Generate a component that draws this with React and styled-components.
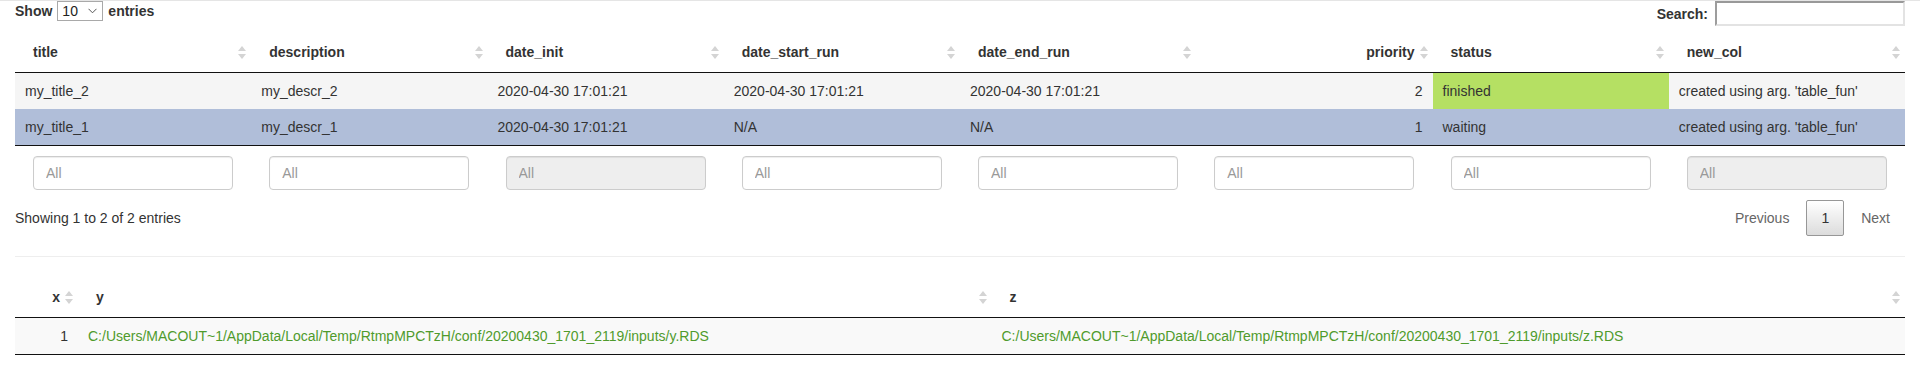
import React from 'react'
import styled, { createGlobalStyle } from 'styled-components'

const GlobalStyle = createGlobalStyle`
  body {
    margin: 0;
    background: #fff;
    font-family: "Liberation Sans", Arial, Helvetica, sans-serif;
    font-size: 14px;
    line-height: 20px;
    color: #333;
  }
`

const Page = styled.div`
  border-top: 1px solid #e5e5e5;
  padding: 0 15px;
`

const Controls = styled.div`
  display: flex;
  justify-content: space-between;
  align-items: flex-start;
  height: 26px;
`

const LengthLabel = styled.label`
  display: flex;
  align-items: center;
  gap: 5px;
  height: 20px;
  font-weight: bold;
`

const FakeSelect = styled.div`
  display: flex;
  align-items: center;
  justify-content: space-between;
  box-sizing: border-box;
  width: 46px;
  height: 20px;
  padding: 0 5px 0 4px;
  border: 1px solid #a9a9a9;
  font-weight: normal;
  color: #222;
`

const SearchLabel = styled.label`
  display: flex;
  align-items: center;
  gap: 7px;
  font-weight: bold;
`

const SearchInput = styled.input`
  box-sizing: border-box;
  width: 190px;
  height: 25px;
  border-width: 2px;
  border-style: solid;
  border-color: #999 #e3e3e3 #e3e3e3 #9d9d9d;
  outline: none;
`

const Table = styled.table`
  width: 100%;
  table-layout: fixed;
  border-collapse: collapse;
  margin-top: ${p => p.$top || 0}px;
`

const Th = styled.th`
  padding: 10px 5px 10px 18px;
  font-weight: bold;
  border-bottom: 1px solid #111;
  text-align: left;
`

const HeadInner = styled.div`
  display: flex;
  align-items: center;
  justify-content: ${p => (p.$right ? 'flex-end' : 'space-between')};
  gap: 5px;
`

const Tr = styled.tr`
  background: ${p => (p.$selected ? '#b0bed9' : p.$bg)};
  & + & td {
    border-top: 1px solid #ddd;
  }
  &:last-child td {
    border-bottom: 1px solid #111;
  }
`

const Td = styled.td`
  padding: 8px 10px;
  text-align: ${p => (p.$right ? 'right' : 'left')};
  background: ${p => p.$bg || 'transparent'};
  color: ${p => p.$color || '#333'};
  white-space: nowrap;
  overflow: hidden;
`

const FilterCell = styled.td`
  padding: 10px 18px 6px;
`

const FilterInput = styled.input`
  box-sizing: border-box;
  display: block;
  width: 200px;
  height: 34px;
  padding: 6px 12px;
  border: 1px solid #ccc;
  border-radius: 4px;
  background: ${p => (p.disabled ? '#eee' : '#fff')};
  font-family: inherit;
  font-size: 14px;
  box-shadow: inset 0 1px 1px rgba(0, 0, 0, 0.075);
  &::placeholder {
    color: #999;
  }
`

const InfoRow = styled.div`
  display: flex;
  justify-content: space-between;
  align-items: center;
  padding-top: 4px;
`

const Paginate = styled.div`
  display: flex;
`

const PageButton = styled.span`
  padding: 7px 14px;
  margin-left: 2px;
  border: 1px solid ${p => (p.$current ? '#979797' : 'transparent')};
  border-radius: 2px;
  color: ${p => (p.$current ? '#333' : '#666')};
  background: ${p =>
    p.$current ? 'linear-gradient(to bottom, #fff 0%, #dcdcdc 100%)' : 'none'};
`

const Divider = styled.hr`
  margin: 20px 0;
  border: 0;
  border-top: 1px solid #eee;
`

const SortIcon = () => (
  <svg width="8" height="13" viewBox="0 0 8 13">
    <path d="M4 0 L8 5 L0 5 Z" fill="#d4d4d4" />
    <path d="M4 13 L8 8 L0 8 Z" fill="#d4d4d4" />
  </svg>
)

const Chevron = () => (
  <svg width="9" height="6" viewBox="0 0 9 6">
    <path d="M0.5 0.8 L4.5 4.8 L8.5 0.8" fill="none" stroke="#555" strokeWidth="1" />
  </svg>
)

const columns = [
  'title',
  'description',
  'date_init',
  'date_start_run',
  'date_end_run',
  'priority',
  'status',
  'new_col'
]

const rows = [
  {
    title: 'my_title_2',
    description: 'my_descr_2',
    date_init: '2020-04-30 17:01:21',
    date_start_run: '2020-04-30 17:01:21',
    date_end_run: '2020-04-30 17:01:21',
    priority: 2,
    status: 'finished',
    new_col: "created using arg. 'table_fun'"
  },
  {
    title: 'my_title_1',
    description: 'my_descr_1',
    date_init: '2020-04-30 17:01:21',
    date_start_run: 'N/A',
    date_end_run: 'N/A',
    priority: 1,
    status: 'waiting',
    new_col: "created using arg. 'table_fun'",
    selected: true
  }
]

const disabledFilters = ['date_init', 'new_col']

const path = 'C:/Users/MACOUT~1/AppData/Local/Temp/RtmpMPCTzH/conf/20200430_1701_2119/inputs/'

const Header = ({ label, right }) => (
  <Th>
    <HeadInner $right={right}>
      <span>{label}</span>
      <SortIcon />
    </HeadInner>
  </Th>
)

const App = () => (
  <Page>
    <GlobalStyle />
    <Controls>
      <LengthLabel>
        Show
        <FakeSelect>
          10 <Chevron />
        </FakeSelect>
        entries
      </LengthLabel>
      <SearchLabel>
        Search:
        <SearchInput type="search" />
      </SearchLabel>
    </Controls>

    <Table $top={5}>
      <thead>
        <tr>
          {columns.map(c => (
            <Header key={c} label={c} right={c === 'priority'} />
          ))}
        </tr>
      </thead>
      <tbody>
        {rows.map(r => (
          <Tr key={r.title} $selected={r.selected} $bg="#f5f5f5">
            {columns.map(c => (
              <Td
                key={c}
                $right={c === 'priority'}
                $bg={c === 'status' && r.status === 'finished' ? '#b5e063' : null}
              >
                {r[c]}
              </Td>
            ))}
          </Tr>
        ))}
      </tbody>
      <tfoot>
        <tr>
          {columns.map(c => (
            <FilterCell key={c}>
              <FilterInput placeholder="All" disabled={disabledFilters.includes(c)} />
            </FilterCell>
          ))}
        </tr>
      </tfoot>
    </Table>

    <InfoRow>
      <div>Showing 1 to 2 of 2 entries</div>
      <Paginate>
        <PageButton>Previous</PageButton>
        <PageButton $current>1</PageButton>
        <PageButton>Next</PageButton>
      </Paginate>
    </InfoRow>

    <Divider />

    <Table>
      <colgroup>
        <col style={{ width: '63px' }} />
        <col />
        <col />
      </colgroup>
      <thead>
        <tr>
          <Header label="x" right />
          <Header label="y" />
          <Header label="z" />
        </tr>
      </thead>
      <tbody>
        <Tr $bg="#f9f9f9">
          <Td $right>1</Td>
          <Td $color="#4f9b2c">{path + 'y.RDS'}</Td>
          <Td $color="#4f9b2c">{path + 'z.RDS'}</Td>
        </Tr>
      </tbody>
    </Table>
  </Page>
)

export default App
